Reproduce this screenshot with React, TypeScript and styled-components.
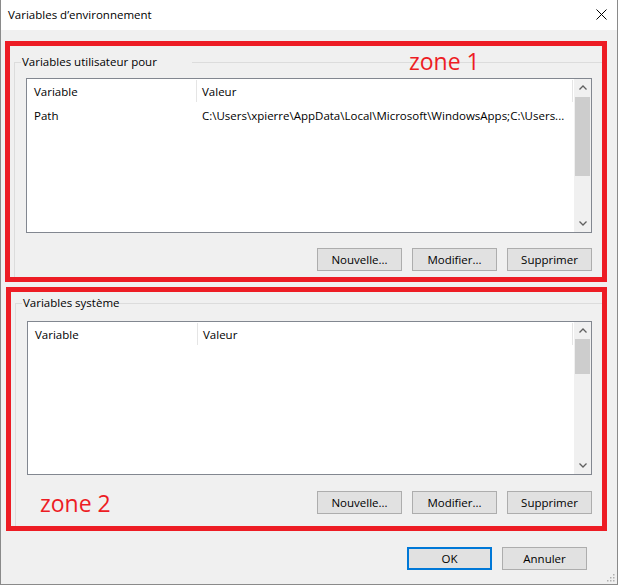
import React from 'react';
import styled, { createGlobalStyle } from 'styled-components';

const UI_FONT = `"Open Sans", "Noto Sans", "Liberation Sans", sans-serif`;

const GlobalStyle = createGlobalStyle`
  html, body { margin: 0; padding: 0; background: #f0f0f0; }
  body { font-family: ${UI_FONT}; font-size: 11px; color: #000; }
  * { box-sizing: border-box; }
`;

const Window = styled.div`
  position: relative;
  width: 618px;
  height: 585px;
  background: #f0f0f0;
  border: 1px solid #8a8a8a;
  border-top: none;
  display: flex;
  flex-direction: column;
`;

const TitleBar = styled.header`
  height: 30px;
  flex: none;
  background: #ffffff;
  display: flex;
  align-items: center;
  justify-content: space-between;
  padding: 0 10px 1px 7px;
`;

const Title = styled.span`
  font-size: 11.5px;
  color: #000;
`;

const Body = styled.main`
  display: flex;
  flex-direction: column;
  gap: 5px;
  padding: 11px 10px 0 4px;
`;

const Zone = styled.section<{ $h: number; $ml?: number }>`
  position: relative;
  height: ${(p) => p.$h}px;
  margin-left: ${(p) => p.$ml ?? 0}px;
  border: 5px solid #ed1c24;
  display: flex;
  flex-direction: column;
`;

const ZoneLabel = styled.span<{ $top: number; $left: number; $size: number }>`
  position: absolute;
  top: ${(p) => p.$top}px;
  left: ${(p) => p.$left}px;
  font-family: ${UI_FONT};
  font-size: ${(p) => p.$size}px;
  line-height: ${(p) => p.$size}px;
  color: #ed1c24;
  white-space: nowrap;
`;

const GroupBox = styled.fieldset<{ $mt: number; $pt: number }>`
  flex: 1;
  min-width: 0;
  margin: ${(p) => p.$mt}px 0 0 4px;
  padding: ${(p) => p.$pt}px 10px 0 11px;
  border: none;
  border-top: 1px solid #dcdcdc;
  border-left: 1px solid #dcdcdc;
  display: flex;
  flex-direction: column;
`;

const Legend = styled.legend<{ $w: number }>`
  width: ${(p) => p.$w}px;
  margin-left: -5px;
  padding: 0 0 0 1px;
  line-height: 16px;
  font-size: 11.5px;
  white-space: nowrap;
`;

const ListView = styled.div<{ $h: number }>`
  height: ${(p) => p.$h}px;
  flex: none;
  border: 1px solid #828790;
  background: #ffffff;
  display: grid;
  grid-template-columns: 1fr 17px;
`;

const ListContent = styled.div`
  min-width: 0;
  display: flex;
  flex-direction: column;
`;

const HeaderRow = styled.div`
  display: grid;
  grid-template-columns: 170px 1fr;
  height: 24px;
  padding-right: 1px;
`;

const HeaderCell = styled.div<{ $pl: number }>`
  display: flex;
  align-items: center;
  padding-left: ${(p) => p.$pl}px;
  border-right: 1px solid #e5e5e5;
  margin: 1px 0 1px;
  font-size: 11.5px;
`;

const Row = styled.div`
  display: grid;
  grid-template-columns: 170px 1fr;
  height: 24px;
`;

const Cell = styled.div<{ $pl: number }>`
  display: flex;
  align-items: center;
  padding-left: ${(p) => p.$pl}px;
  white-space: nowrap;
  overflow: hidden;
  font-size: 11.5px;
`;

const ScrollBar = styled.div`
  background: #f0f0f0;
  display: flex;
  flex-direction: column;
`;

const ArrowBox = styled.div`
  height: 17px;
  flex: none;
  display: flex;
  align-items: center;
  justify-content: center;
`;

const Track = styled.div`
  flex: 1;
  display: flex;
  flex-direction: column;
`;

const Thumb = styled.div<{ $mt: number; $h: number }>`
  margin: ${(p) => p.$mt}px 1px 0;
  height: ${(p) => p.$h}px;
  background: #cdcdcd;
`;

const ButtonRow = styled.div<{ $mt: number }>`
  display: flex;
  justify-content: flex-end;
  gap: 10px;
  margin-top: ${(p) => p.$mt}px;
`;

const Button = styled.button<{ $primary?: boolean }>`
  width: 85px;
  height: 23px;
  padding: 0;
  background: #e1e1e1;
  border: ${(p) => (p.$primary ? '2px solid #0078d7' : '1px solid #adadad')};
  font-family: ${UI_FONT};
  font-size: 11.5px;
  color: #000;
`;

const Footer = styled.footer`
  display: flex;
  justify-content: flex-end;
  gap: 10px;
  margin-top: 11px;
  padding-right: 20px;
`;

const Grip = styled.svg`
  position: absolute;
  right: 2px;
  bottom: 2px;
`;

const Chevron = ({ up }: { up?: boolean }) => (
  <svg width="8" height="5" viewBox="0 0 8 5">
    <polyline
      points={up ? '0.5,4.5 4,1 7.5,4.5' : '0.5,0.5 4,4 7.5,0.5'}
      fill="none"
      stroke="#606060"
      strokeWidth="1.3"
    />
  </svg>
);

type ListProps = {
  h: number;
  thumbTop: number;
  thumbH: number;
  rows: { name: string; value: string }[];
};

const List = ({ h, thumbTop, thumbH, rows }: ListProps) => (
  <ListView $h={h}>
    <ListContent>
      <HeaderRow>
        <HeaderCell $pl={7}>Variable</HeaderCell>
        <HeaderCell $pl={5}>Valeur</HeaderCell>
      </HeaderRow>
      {rows.map((r) => (
        <Row key={r.name}>
          <Cell $pl={7}>{r.name}</Cell>
          <Cell $pl={5}>{r.value}</Cell>
        </Row>
      ))}
    </ListContent>
    <ScrollBar>
      <ArrowBox>
        <Chevron up />
      </ArrowBox>
      <Track>
        <Thumb $mt={thumbTop} $h={thumbH} />
      </Track>
      <ArrowBox>
        <Chevron />
      </ArrowBox>
    </ScrollBar>
  </ListView>
);

const Actions = ({ mt }: { mt: number }) => (
  <ButtonRow $mt={mt}>
    <Button>Nouvelle...</Button>
    <Button>Modifier...</Button>
    <Button>Supprimer</Button>
  </ButtonRow>
);

export default function App() {
  return (
    <>
      <GlobalStyle />
      <Window>
        <TitleBar>
          <Title>Variables d’environnement</Title>
          <svg width="11" height="11" viewBox="0 0 11 11">
            <path d="M0.5 0.5 L10.5 10.5 M10.5 0.5 L0.5 10.5" stroke="#000" strokeWidth="1" />
          </svg>
        </TitleBar>
        <Body>
          <Zone $h={241}>
            <GroupBox $mt={8} $pt={8}>
              <Legend $w={171}>Variables utilisateur pour</Legend>
              <List
                h={155}
                thumbTop={1}
                thumbH={79}
                rows={[
                  {
                    name: 'Path',
                    value: 'C:\\Users\\xpierre\\AppData\\Local\\Microsoft\\WindowsApps;C:\\Users...',
                  },
                ]}
              />
              <Actions mt={15} />
            </GroupBox>
            <ZoneLabel $top={4} $left={399} $size={23}>
              zone 1
            </ZoneLabel>
          </Zone>
          <Zone $h={244} $ml={1}>
            <GroupBox $mt={3} $pt={10}>
              <Legend $w={93}>Variables système</Legend>
              <List h={154} thumbTop={0} thumbH={35} rows={[]} />
              <Actions mt={16} />
            </GroupBox>
            <ZoneLabel $top={200} $left={29} $size={23}>
              zone 2
            </ZoneLabel>
          </Zone>
          <Footer>
            <Button $primary>OK</Button>
            <Button>Annuler</Button>
          </Footer>
        </Body>
        <Grip width="9" height="9" viewBox="0 0 9 9">
          <rect x="7" y="1" width="1.5" height="1.5" fill="#b0b0b0" />
          <rect x="4" y="4" width="1.5" height="1.5" fill="#b0b0b0" />
          <rect x="7" y="4" width="1.5" height="1.5" fill="#b0b0b0" />
          <rect x="1" y="7" width="1.5" height="1.5" fill="#b0b0b0" />
          <rect x="4" y="7" width="1.5" height="1.5" fill="#b0b0b0" />
          <rect x="7" y="7" width="1.5" height="1.5" fill="#b0b0b0" />
        </Grip>
      </Window>
    </>
  );
}
